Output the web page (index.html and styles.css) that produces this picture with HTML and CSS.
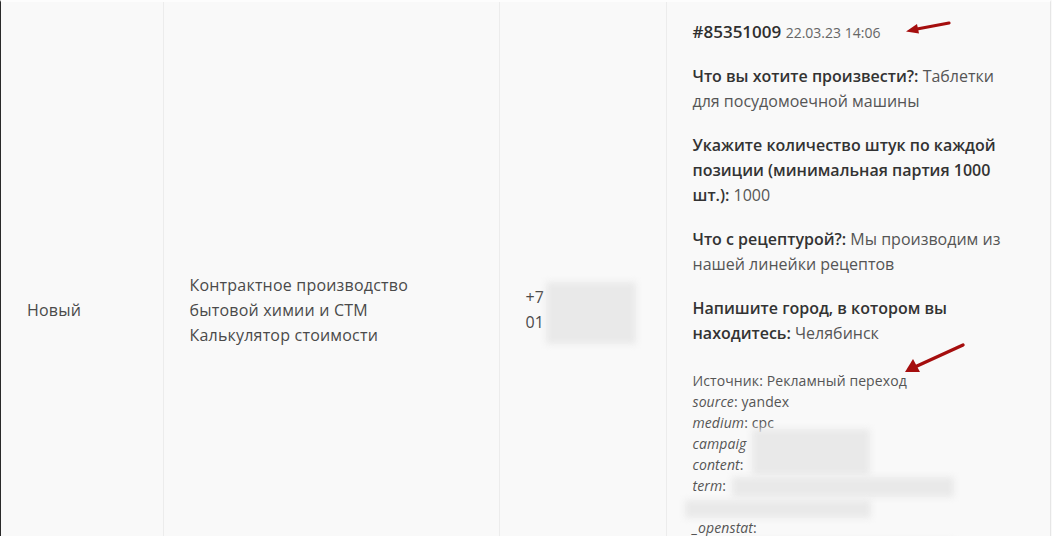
FILE: index.html
```html
<!DOCTYPE html>
<html lang="ru">
<head>
<meta charset="utf-8">
<link rel="stylesheet" href="styles.css">
</head>
<body>
<div class="frame">
  <table class="leads">
    <tr class="row">
      <td class="c1">Новый</td>
      <td class="c2">Контрактное производство бытовой химии и СТМ Калькулятор стоимости</td>
      <td class="c3"><div class="phone">+7 <span class="blur-wrap"><span class="blur phone-blur"></span></span><br>01</div></td>
      <td class="c4">
        <div class="info">
          <p class="head"><b>#85351009</b> <span class="date">22.03.23 14:06</span></p>
          <p><b>Что вы хотите произвести?:</b> Таблетки для посудомоечной машины</p>
          <p><b>Укажите количество штук по каждой позиции (минимальная партия 1000 шт.):</b> 1000</p>
          <p><b>Что с рецептурой?:</b> Мы производим из нашей линейки рецептов</p>
          <p><b>Напишите город, в котором вы находитесь:</b> Челябинск</p>
          <div class="source">
            <div>Источник: Рекламный переход</div>
            <div><i>source</i>: yandex</div>
            <div><i>medium</i>: cpc</div>
            <div class="blurline"><i>campaig</i><span class="blur b-camp"></span></div>
            <div class="blurline"><i>content</i>:</div>
            <div class="blurline"><i>term</i>: <span class="blur b-term"></span></div>
            <div class="blurline"><span class="blur b-line"></span></div>
            <div><i>_openstat</i>:</div>
            <div class="blurline"><i>yclid</i>: <span class="blur b-term"></span></div>
          </div>
        </div>
        <svg class="arrow a1" width="50" height="16" viewBox="0 0 50 16"><path d="M46 3 L14 9" stroke="#a50e0e" stroke-width="3.2" stroke-linecap="round" fill="none"/><path d="M3 11.5 L14 4 L16 13.5 Z" fill="#a50e0e"/></svg>
        <svg class="arrow a2" width="64" height="34" viewBox="0 0 64 34"><path d="M60 3 L14 24" stroke="#a50e0e" stroke-width="3.4" stroke-linecap="round" fill="none"/><path d="M2 30 L10 17 L17 30 Z" fill="#a50e0e"/></svg>
      </td>
    </tr>
  </table>
</div>
</body>
</html>
```
FILE: styles.css
```css
html, body {
  margin: 0;
  padding: 0;
  background: #f9f9f9;
  overflow: hidden;
}
.frame {
  border-left: 1px solid #2a2a2a;
  width: 1049px;
  border-right: 1px solid #e6e6e6;
  border-top: 2px solid #fdfdfd;
}
.leads {
  border-collapse: collapse;
  table-layout: fixed;
  width: 1049px;
  font-family: "Open Sans", "Noto Sans", sans-serif;
  font-size: 16px;
  letter-spacing: 0.2px;
  color: #4a4a4a;
}
.row { height: 616px; }
.leads td {
  vertical-align: middle;
  padding: 0 26px;
  border-right: 1px solid #ececec;
  line-height: 25px;
  background: #f9f9f9;
}
.leads td:last-child { border-right: none; }
.c1 { width: 162px; box-sizing: border-box; }
.c2 { width: 336px; box-sizing: border-box; }
.c3 { width: 167px; box-sizing: border-box; }
.c4 { position: relative; vertical-align: top !important; padding-top: 17px !important; letter-spacing: 0; }
.phone { position: relative; }
.blur-wrap { position: relative; }
.blur {
  display: inline-block;
  background: #e9e9e9;
  filter: blur(3px);
  vertical-align: middle;
}
.phone-blur {
  position: absolute;
  left: 2px;
  top: -4px;
  width: 90px;
  height: 62px;
}
.info p {
  margin: 0 0 19px;
  color: #555;
}
.info b {
  font-weight: 600;
  color: #333;
}
.head { font-size: 17px; }
.head b { color: #2f2f2f; }
.date { font-size: 14px; color: #666; }
.source {
  margin-top: 24px;
  font-size: 14px;
  letter-spacing: 0.1px;
  line-height: 21px;
  color: #555;
}
.source i { color: #555; }
.blurline { position: relative; height: 21px; }
.b-camp { position: absolute; left: 59px; top: -4px; width: 118px; height: 46px; }
.b-term { position: absolute; left: 39px; top: 2px; width: 222px; height: 20px; }
.b-line { position: absolute; left: -8px; top: 4px; width: 186px; height: 18px; }
.arrow { position: absolute; }
.a1 { left: 236px; top: 18px; }
.a2 { left: 236px; top: 340px; }
```
